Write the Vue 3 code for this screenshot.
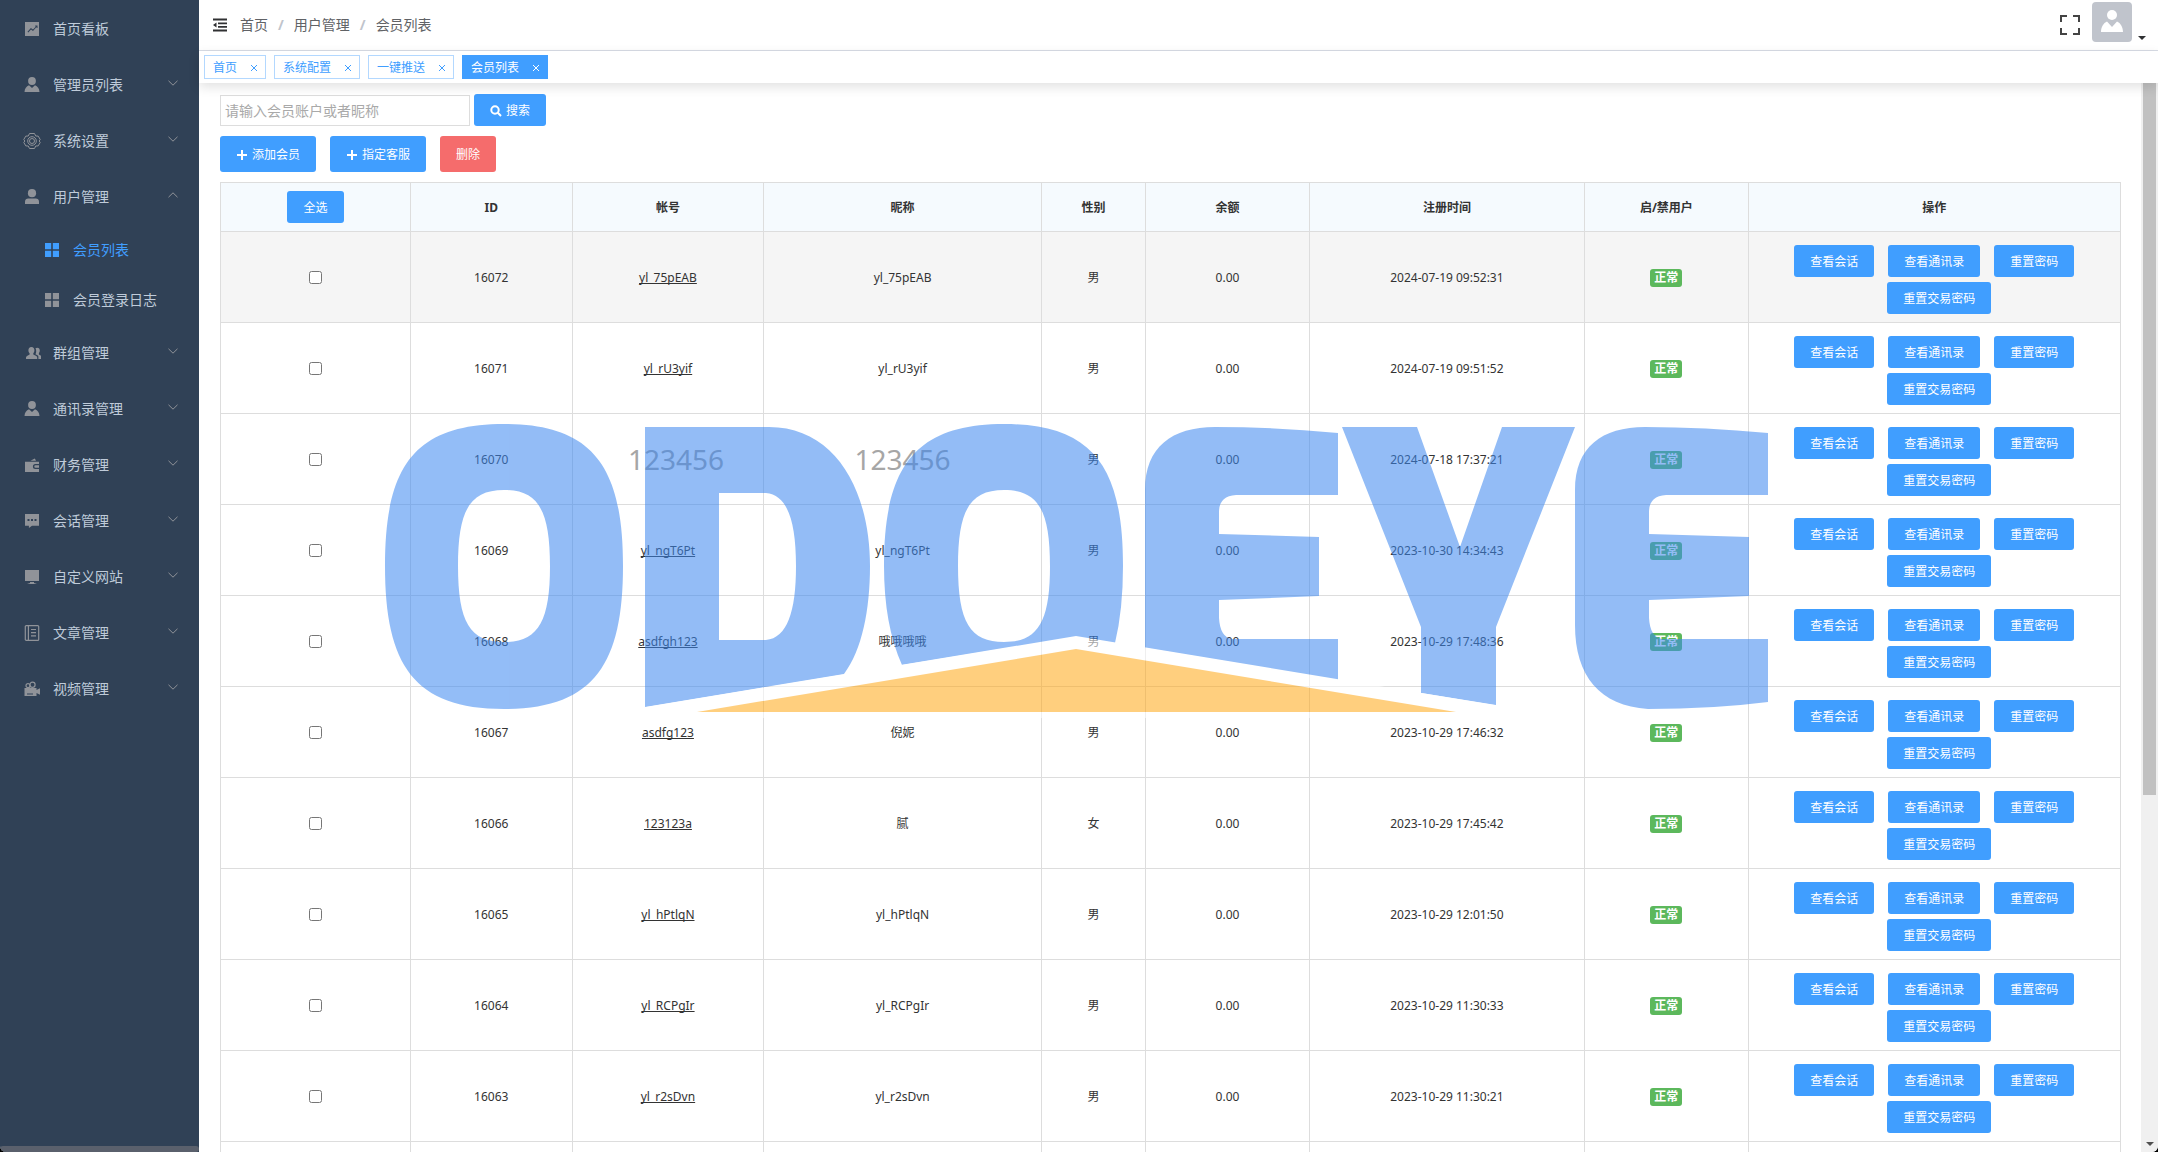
<script setup>
import { ref } from 'vue'

const menu = [
  { label: '首页看板', icon: 'chart' },
  { label: '管理员列表', icon: 'custom', sub: true },
  { label: '系统设置', icon: 'gear', sub: true },
  {
    label: '用户管理', icon: 'user', sub: true, open: true,
    children: [
      { label: '会员列表', active: true },
      { label: '会员登录日志' },
    ],
  },
  { label: '群组管理', icon: 'group', sub: true },
  { label: '通讯录管理', icon: 'custom', sub: true },
  { label: '财务管理', icon: 'wallet', sub: true },
  { label: '会话管理', icon: 'chat', sub: true },
  { label: '自定义网站', icon: 'screen', sub: true },
  { label: '文章管理', icon: 'book', sub: true },
  { label: '视频管理', icon: 'video', sub: true },
]

const icons = {
  chart: '<path fill-rule="evenodd" d="M2 2h14v14H2zM4.500 11.800l.8.8 2.700-3 2 1.500 3.500-4.100.1 1 .9-.1V5.600h-2.300v.9h.7L10 9.600 7.900 8z"/>',
  custom: '<circle cx="9" cy="5" r="3.900"/><path d="M6 9.300 9 12l3-2.700c2.600.9 4.300 3.200 4.500 6.700h-15C1.700 12.500 3.400 10.200 6 9.300z"/>',
  gear: '<g fill="none" stroke="currentColor"><path d="M6.500 1.500h5l1.200 2.500 2.500.1L17.200 7.500 16.200 9l1 1.500-2 3.400-2.500.1-1.200 2.500h-5l-1.200-2.500-2.500-.1-2-3.400L1.800 9l-1-1.500 2-3.400L5.300 4z"/><circle cx="9" cy="9" r="4.300"/><circle cx="9" cy="9" r="2.500"/></g>',
  user: '<circle cx="9" cy="5.200" r="4.100"/><path d="M2 16v-2.500C2 11.600 3.400 10.400 5.200 10.400h7.600c1.800 0 3.200 1.200 3.200 3.100V16z"/>',
  group: '<path d="M8.400 3c2 0 3 1.500 3 3.200 0 1.400-.5 2.400-1.100 3v1.300l3 1.500c.6.300.9.900.9 1.600V15H3v-1.400c0-.7.400-1.300 1-1.600l2.600-1.500V9.200C5.900 8.600 5.400 7.600 5.400 6.200 5.400 4.500 6.400 3 8.400 3z"/><path d="M14.300 3.800c1.700 0 2.500 1.200 2.500 2.700 0 1.200-.3 2-.9 2.600v1.300l2.200 1.300c.5.300.9.900.9 1.600V15h-3.600v-2.200c0-.7-.4-1.200-1-1.500l-1.900-1c.5-1 .7-1.900.7-3.200 0-1.200-.3-2.100-.7-2.800.4-.3 1-.5 1.800-.5z"/>',
  wallet: '<path d="M7.500 4.800 11.800 2.500 13 4.800z"/><path fill-rule="evenodd" d="M2 5.700h14V8h-3.600a2.500 2.500 0 0 0 0 5H16v3H2zM12.600 9.200H16v2.600h-3.400a1.300 1.300 0 0 1 0-2.600z"/>',
  chat: '<path fill-rule="evenodd" d="M2 2h14v11.800H9L5.900 16v-2.200H2zM4.500 7v2h2V7zM8 7v2h2V7zM11.500 7v2h2V7z"/>',
  screen: '<path d="M2 2h14v11H2zM7 14h4v1l3 1H4l3-1z"/>',
  book: '<g fill="none" stroke="currentColor" stroke-width="1.200"><rect x="2.300" y="1.600" width="13.400" height="14.800" rx="1"/><path d="M5.400 1.600v14.800M8 5.500h5M8 8.700h5M8 11.900h5"/></g>',
  video: '<path d="M1.500 8h12v2l3.500-1.700v6.400L13.500 13v3h-12z"/><g fill="none" stroke="currentColor" stroke-width="1.200"><circle cx="5" cy="5.700" r="2"/><circle cx="9.500" cy="4.700" r="2.600"/></g><path d="M4 13.500h6v1H4z" fill="#304156"/>',
  grid: '<path d="M2 2h6.200v6.200H2zM9.800 2H16v6.200H9.800zM2 9.800h6.200V16H2zM9.800 9.800H16V16H9.800z"/>',
}

const tabs = [
  { label: '首页' },
  { label: '系统配置' },
  { label: '一键推送' },
  { label: '会员列表', active: true },
]

const widths = [10, 8.5, 10.1, 14.6, 5.5, 8.6, 14.5, 8.6, 19.6]
const heads = ['ID', '帐号', '昵称', '性别', '余额', '注册时间', '启/禁用户', '操作']
const actions = ['查看会话', '查看通讯录', '重置密码', '重置交易密码']

const rows = [
  { id: 16072, account: 'yl_75pEAB', nick: 'yl_75pEAB', sex: '男', time: '2024-07-19 09:52:31', hover: true },
  { id: 16071, account: 'yl_rU3yif', nick: 'yl_rU3yif', sex: '男', time: '2024-07-19 09:51:52' },
  { id: 16070, account: '123456', nick: '123456', sex: '男', time: '2024-07-18 17:37:21', masked: true },
  { id: 16069, account: 'yl_ngT6Pt', nick: 'yl_ngT6Pt', sex: '男', time: '2023-10-30 14:34:43' },
  { id: 16068, account: 'asdfgh123', nick: '哦哦哦哦', sex: '男', time: '2023-10-29 17:48:36' },
  { id: 16067, account: 'asdfg123', nick: '倪妮', sex: '男', time: '2023-10-29 17:46:32' },
  { id: 16066, account: '123123a', nick: '腻', sex: '女', time: '2023-10-29 17:45:42' },
  { id: 16065, account: 'yl_hPtlqN', nick: 'yl_hPtlqN', sex: '男', time: '2023-10-29 12:01:50' },
  { id: 16064, account: 'yl_RCPgIr', nick: 'yl_RCPgIr', sex: '男', time: '2023-10-29 11:30:33' },
  { id: 16063, account: 'yl_r2sDvn', nick: 'yl_r2sDvn', sex: '男', time: '2023-10-29 11:30:21' },
]

const keyword = ref('')
const checked = ref([])
const toggleAll = () => {
  checked.value = checked.value.length === rows.length ? [] : rows.map((r) => r.id)
}
</script>

<template>
  <div class="app">
    <nav class="sidebar">
      <ul class="menu">
        <li v-for="m in menu" :key="m.label">
          <a href="#" class="item">
            <svg class="glyph" viewBox="0 0 18 18" v-html="icons[m.icon]"></svg>
            <span class="label">{{ m.label }}</span>
            <svg v-if="m.sub" class="chevron" :class="{ up: m.open }" viewBox="0 0 12 12"><path d="M1.500 3.800 6 8.200l4.500-4.400" /></svg>
          </a>
          <ul v-if="m.children" class="menu">
            <li v-for="c in m.children" :key="c.label">
              <a href="#" class="item child" :class="{ active: c.active }">
                <svg class="glyph" viewBox="0 0 18 18" v-html="icons.grid"></svg>
                <span class="label">{{ c.label }}</span>
              </a>
            </li>
          </ul>
        </li>
      </ul>
      <div class="side-scroll"></div>
    </nav>

    <div class="main">
      <header class="topbar">
        <button class="fold" aria-label="折叠菜单">
          <svg viewBox="0 0 16 16"><path d="M1 1.500h14v2H1zM6 5.500h9v1.700H6zM6 9h9v1.700H6zM1 12.500h14v2H1zM1 8l3.500-2.600v5.200z" /></svg>
        </button>
        <div class="crumbs">
          <a href="#">首页</a><i>/</i><a href="#">用户管理</a><i>/</i><a href="#">会员列表</a>
        </div>
        <div class="tools">
          <button class="full" aria-label="全屏">
            <svg viewBox="0 0 20 20"><path d="M1 7V1h6M13 1h6v6M19 13v6h-6M7 19H1v-6" /></svg>
          </button>
          <button class="avatar" aria-label="账户">
            <svg viewBox="0 0 40 40"><circle cx="20" cy="13" r="5" /><path d="M15 19.500 20 25l5-5.500c3.500 1.500 6 5.500 6 10.500H9c0-5 2.500-9 6-10.500z" /></svg>
          </button>
          <span class="caret"></span>
        </div>
      </header>

      <div class="tabs">
        <a v-for="t in tabs" :key="t.label" href="#" class="tab" :class="{ active: t.active }">
          <span>{{ t.label }}</span>
          <svg viewBox="0 0 8 8"><path d="M1 1l6 6M7 1 1 7" /></svg>
        </a>
      </div>

      <div class="body">
        <main class="content">
          <form class="search" @submit.prevent>
            <input v-model="keyword" type="text" aria-label="会员账户或者昵称" placeholder="请输入会员账户或者昵称" />
            <button class="btn with-icon">
              <svg viewBox="0 0 12 12"><circle cx="5" cy="5" r="3.700" /><path d="m7.800 7.800 3.200 3.200" /></svg>搜索
            </button>
          </form>
          <div class="toolbar">
            <button class="btn tall with-icon"><svg viewBox="0 0 12 12"><path d="M6 1v10M1 6h10" /></svg>添加会员</button>
            <button class="btn tall with-icon"><svg viewBox="0 0 12 12"><path d="M6 1v10M1 6h10" /></svg>指定客服</button>
            <button class="btn tall danger">删除</button>
          </div>
          <table>
            <colgroup>
              <col v-for="(w, i) in widths" :key="i" :style="{ width: w + '%' }" />
            </colgroup>
            <thead>
              <tr>
                <th class="pick"><button class="btn" @click="toggleAll">全选</button></th>
                <th v-for="h in heads" :key="h">{{ h }}</th>
              </tr>
            </thead>
            <tbody>
              <tr v-for="r in rows" :key="r.id" :class="{ hover: r.hover, masked: r.masked }">
                <td class="pick"><input v-model="checked" type="checkbox" :value="r.id" :aria-label="'选择 ' + r.id" /></td>
                <td>{{ r.id }}</td>
                <td class="account"><a href="#">{{ r.account }}</a></td>
                <td class="nick">{{ r.nick }}</td>
                <td>{{ r.sex }}</td>
                <td>0.00</td>
                <td>{{ r.time }}</td>
                <td><span class="badge">正常</span></td>
                <td class="ops">
                  <div class="actions">
                    <button v-for="a in actions" :key="a" class="btn">{{ a }}</button>
                  </div>
                </td>
              </tr>
              <tr>
                <td v-for="(w, i) in widths" :key="i"></td>
              </tr>
            </tbody>
          </table>
        </main>
        <div class="scroll">
          <div class="thumb"></div>
          <span class="down"></span>
        </div>
      </div>
    </div>

    <svg class="watermark" viewBox="0 0 2158 1152" role="img" aria-label="ODOEYE">
      <g opacity="0.550">
        <g fill="#3b87f0" fill-rule="evenodd">
          <path d="M504 424C594 424 623 468 623 566S594 709 504 709 385 665 385 566 414 424 504 424zM504 490C470 490 458 510 458 566S470 642 504 642 550 622 550 566 538 490 504 490z" />
          <path d="M645 427H769C835 427 870 490 870 566 870 610 862 650 844 674L645 707zM719 493V640H766C787 638 796 612 796 566S787 495 766 493z" />
          <path d="M884 566C884 468 914 424 1004 424S1123 468 1123 566Q1123 610 1115 643L1076 637 902 665Q884 625 884 566zM1004 490C970 490 958 510 958 566S970 642 1004 642 1050 622 1050 566 1038 490 1004 490z" />
          <path d="M1145 490C1145 447 1172 427 1215 427Q1275 427 1338 433V495H1236Q1219 496 1219 512V534L1319 537V596L1219 600V618Q1220 637 1232 639H1338V680L1145 648z" />
          <path d="M1342 427H1417L1460 547 1502 427H1575L1496 627V705L1421 693V627z" />
          <path d="M1575 490C1575 447 1602 427 1645 427Q1705 427 1768 433V495H1666Q1649 496 1649 512V534L1749 537V596L1649 600V618Q1650 637 1662 639H1768V702Q1713 709 1648 709C1600 706 1575 676 1575 625z" />
        </g>
        <path fill="#fff" d="M1076 636 1573 718H580z" />
        <path fill="#ffa816" d="M1076 649 1456 712H697z" />
      </g>
    </svg>
  </div>
</template>

<style>
body {
  margin: 0;
  background: #000;
}
</style>

<style scoped>
* {
  box-sizing: border-box;
}
.app {
  position: relative;
  display: flex;
  height: 100vh;
  overflow: hidden;
  border-radius: 0 0 6px 6px;
  background: #fff;
  color: #333;
  font: 12px/20px "Noto Sans", "Noto Sans CJK SC", sans-serif;
}
a {
  color: inherit;
  text-decoration: none;
}
button {
  font: inherit;
  border: 0;
  padding: 0;
  background: none;
  cursor: pointer;
}
.sidebar {
  flex: none;
  display: flex;
  flex-direction: column;
  justify-content: space-between;
  width: 199px;
  padding-top: 1px;
  background: #304156;
}
.menu {
  list-style: none;
  margin: 0;
  padding: 0;
}
.item {
  display: flex;
  align-items: center;
  height: 56px;
  padding: 0 20px 0 23px;
  color: #bfcbd9;
  font-size: 14px;
}
.item.child {
  height: 50px;
  padding-left: 43px;
}
.item.active,
.item.active .glyph {
  color: #409eff;
}
.glyph {
  width: 18px;
  height: 18px;
  margin-right: 12px;
  fill: currentColor;
  color: #909399;
}
.chevron {
  width: 12px;
  height: 12px;
  margin: 0 0 4px auto;
  fill: none;
  stroke: #909399;
}
.chevron.up {
  transform: rotate(180deg);
}
.side-scroll {
  height: 6px;
  border-radius: 3px;
  background: #5a606c;
}
.main {
  flex: 1;
  min-width: 0;
  display: flex;
  flex-direction: column;
}
.topbar {
  flex: none;
  display: flex;
  align-items: center;
  height: 51px;
  padding: 0 12px 0 13px;
  border-bottom: 1px solid #d8dce5;
}
.fold svg {
  display: block;
  width: 16px;
  height: 16px;
  fill: #303133;
}
.crumbs {
  margin-left: 12px;
  color: #606266;
  font-size: 14px;
}
.crumbs i {
  margin: 0 10px;
  color: #c0c4cc;
  font-style: normal;
  font-weight: 700;
}
.tools {
  display: flex;
  align-items: center;
  margin-left: auto;
}
.full svg {
  display: block;
  width: 20px;
  height: 20px;
  fill: none;
  stroke: #444;
  stroke-width: 2;
}
.avatar {
  width: 40px;
  height: 40px;
  margin: 0 6px 6px 12px;
  border-radius: 4px;
  background: #c0c4cc;
}
.avatar svg {
  display: block;
  fill: #fff;
}
.caret {
  align-self: flex-end;
  margin-bottom: 8px;
  border: 4px solid transparent;
  border-top-color: #303133;
  border-bottom: 0;
}
.tabs {
  position: relative;
  flex: none;
  display: flex;
  gap: 8px;
  height: 32px;
  padding: 4px 5px;
  box-shadow: 0 4px 12px rgba(0, 0, 0, 0.12);
}
.tab {
  display: flex;
  align-items: center;
  gap: 13px;
  height: 24px;
  padding: 1px 7px 0 8px;
  border: 1px solid #b3d8ff;
  color: #409eff;
}
.tab svg {
  width: 8px;
  height: 8px;
  fill: none;
  stroke: currentColor;
}
.tab.active {
  border-color: #409eff;
  background: #409eff;
  color: #fff;
}
.body {
  flex: 1;
  min-height: 0;
  display: flex;
}
.content {
  flex: 1;
  min-width: 0;
  overflow: hidden;
  padding: 11px 20px 0 21px;
}
.search {
  display: flex;
  align-items: center;
  gap: 4px;
}
.search input {
  width: 250px;
  height: 31px;
  padding: 0 4px;
  border: 1px solid #ddd;
  outline: 0;
  color: #333;
  font: inherit;
  font-size: 14px;
}
.search input::placeholder {
  color: #a9a9a9;
}
.btn {
  height: 32px;
  padding: 2px 16px 0;
  border-radius: 3px;
  background: #409eff;
  color: #fff;
  white-space: nowrap;
}
.btn.tall {
  height: 36px;
}
.btn.danger {
  background: #f56c6c;
}
.with-icon {
  display: flex;
  align-items: center;
  gap: 4px;
}
.with-icon svg {
  width: 12px;
  height: 12px;
  fill: none;
  stroke: #fff;
  stroke-width: 2;
}
.toolbar {
  display: flex;
  gap: 14px;
  margin: 10px 0;
}
table {
  width: 100%;
  table-layout: fixed;
  border-collapse: collapse;
  text-align: center;
}
th,
td {
  padding: 9px 8px 7px;
  border: 1px solid #ddd;
}
th {
  height: 49px;
  background: #f5fafe;
  font-weight: 700;
}
.pick {
  padding: 8px;
}
th .btn {
  display: block;
  margin: auto;
  font-weight: 400;
}
td {
  height: 91px;
}
.hover {
  background: #f5f5f5;
}
td input {
  display: block;
  width: 13px;
  height: 13px;
  margin: auto;
}
.account a {
  text-decoration: underline;
  text-decoration-skip-ink: none;
}
.masked .account,
.masked .nick {
  padding-top: 7px;
  color: #a6a6a6;
  font-size: 28px;
}
.masked .account {
  padding-left: 24px;
}
.masked .account a {
  text-decoration: none;
}
.badge {
  display: inline-block;
  padding: 0 4px;
  border-radius: 3px;
  background: #5cb85c;
  color: #fff;
  font-weight: 700;
  line-height: 18px;
}
td.ops {
  padding: 13px 8px 8px;
}
.actions {
  display: flex;
  flex-wrap: wrap;
  justify-content: center;
  gap: 5px 14px;
}
.actions .btn:last-child {
  margin-left: 10px;
}
.scroll {
  flex: none;
  display: flex;
  flex-direction: column;
  align-items: center;
  justify-content: space-between;
  width: 17px;
  padding-bottom: 6px;
  background: #f0f0f0;
}
.thumb {
  width: 13px;
  height: 67%;
  background: #c1c1c1;
}
.down {
  border: 4px solid transparent;
  border-top-color: #505050;
  border-bottom: 0;
}
.watermark {
  position: absolute;
  inset: 0;
  width: 100%;
  height: 100%;
  pointer-events: none;
}
</style>
